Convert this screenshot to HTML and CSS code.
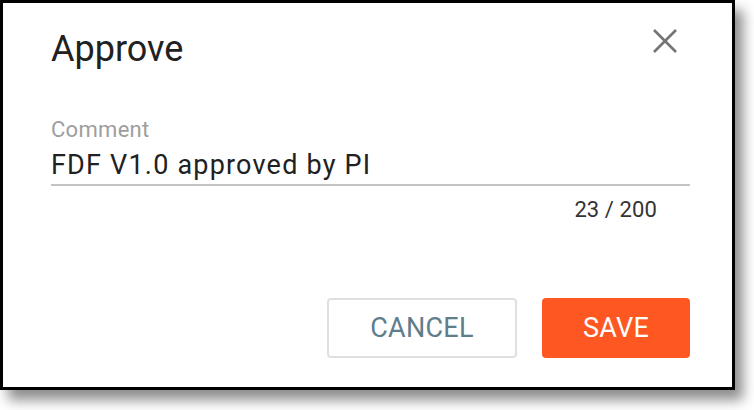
FILE: index.html
```html
<html lang="en">
<head>
    <meta charset="UTF-8">
    <title>Approve</title>
    <link rel="stylesheet" href="styles.css">
</head>
<body>

<div class="dialog">
    <div class="dialog-header">
        <h2 class="dialog-title">Approve</h2>
        <button class="close-btn" aria-label="Close">
            <svg width="36" height="36" viewBox="0 0 36 36">
                <line x1="7" y1="7" x2="29" y2="29" />
                <line x1="29" y1="7" x2="7" y2="29" />
            </svg>
        </button>
    </div>

    <div class="field">
        <label for="comment">Comment</label>
        <input type="text" id="comment" name="comment" value="FDF V1.0 approved by PI" maxlength="200">
        <div class="counter">23 / 200</div>
    </div>

    <div class="actions">
        <button class="cancel-btn">CANCEL</button>
        <button class="save-btn">SAVE</button>
    </div>
</div>

</body>
</html>
```

FILE: styles.css
```css
body {
    font-family: Roboto, "Liberation Sans", Arial, sans-serif;
    background-color: #fff;
    margin: 0;
}
.dialog {
    box-sizing: border-box;
    width: 735px;
    height: 390px;
    border: 3px solid #000;
    background-color: #fff;
    padding: 0 42px 29px 48px;
    display: flex;
    flex-direction: column;
    box-shadow: 8px 10px 12px rgba(0, 0, 0, 0.45);
}
.dialog-header {
    display: flex;
    justify-content: space-between;
    align-items: flex-start;
    padding-top: 24px;
}
.dialog-title {
    margin: 0;
    font-size: 36px;
    font-weight: 400;
    line-height: 44px;
    color: #212121;
}
.close-btn {
    background: none;
    border: none;
    padding: 0;
    margin: -4px 7px 0 0;
    width: 36px;
    height: 36px;
    cursor: pointer;
}
.close-btn svg {
    display: block;
}
.close-btn line {
    stroke: #757575;
    stroke-width: 2.6;
}
.field {
    margin-top: 46px;
}
.field label {
    display: block;
    font-size: 22px;
    line-height: 26px;
    letter-spacing: 0.3px;
    color: #9e9e9e;
}
.field input {
    display: block;
    box-sizing: content-box;
    width: 100%;
    height: 34px;
    margin-top: 5px;
    padding: 0 0 2px 0;
    border: none;
    border-bottom: 2px solid #c4c4c4;
    outline: none;
    font-family: inherit;
    font-size: 27px;
    line-height: 34px;
    letter-spacing: 1.2px;
    color: #212121;
}
.counter {
    margin-top: 11px;
    text-align: right;
    padding-right: 33px;
    font-size: 22px;
    line-height: 26px;
    letter-spacing: 0.1px;
    color: #333;
}
.actions {
    margin-top: auto;
    display: flex;
    justify-content: flex-end;
    gap: 25px;
}
.actions button {
    height: 60px;
    border-radius: 4px;
    font-family: inherit;
    font-size: 27px;
    font-weight: 400;
    letter-spacing: 0.3px;
    cursor: pointer;
    box-sizing: border-box;
}
.cancel-btn {
    width: 190px;
    background-color: #fff;
    border: 2px solid #e0e0e0;
    color: #607d8b;
}
.save-btn {
    width: 148px;
    background-color: #ff5722;
    border: none;
    color: #fff;
}
.save-btn:hover {
    background-color: #f4511e;
}
```
